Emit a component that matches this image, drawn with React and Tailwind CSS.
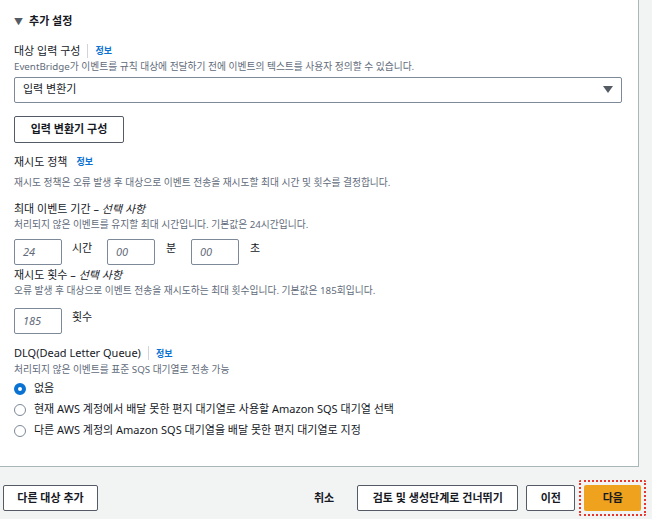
import React from 'react';

const font = { fontFamily: '"Noto Sans", "Noto Sans CJK KR", sans-serif' };

const Info = ({ bar = true }) => (
    <span className="flex items-center">
        {bar && <span className="mx-[7px] h-[14px] w-px bg-[#d1d5db]"></span>}
        <span className="text-[9px] font-bold text-[#0972d3]">정보</span>
    </span>
);

const NumBox = ({ value }) => (
    <div className="flex h-[26px] w-[48px] items-center rounded-[2px] border border-[#7d8998] pl-[8px] text-[11px] italic text-[#5f6b7a]">
        {value}
    </div>
);

const Radio = ({ checked, children }) => (
    <div className="flex h-[21px] items-center gap-[8px]">
        {checked ? (
            <span className="h-[12px] w-[12px] rounded-full border-[4px] border-[#0972d3] bg-white"></span>
        ) : (
            <span className="h-[12px] w-[12px] rounded-full border border-[#7d8998] bg-white"></span>
        )}
        <span className="text-[11px] text-[#16191f]">{children}</span>
    </div>
);

export default function App() {
    return (
        <div className="flex h-[519px] w-[652px] flex-col overflow-hidden bg-[#f2f3f3]" style={font}>
            {/* Panel */}
            <div className="h-[467px] w-[639px] border-b border-r border-[#aab7b8] bg-white pl-[14px] pr-[16px] text-[#16191f]">
                <div className="mt-[13px] flex items-center gap-[6px] text-[11px] font-bold">
                    <span className="text-[9px] text-[#545b64]">▼</span>
                    <span>추가 설정</span>
                </div>

                <div className="mt-[13px] flex items-center text-[11px]">
                    <span>대상 입력 구성</span>
                    <Info />
                </div>
                <p className="mt-[1px] text-[9.75px] text-[#5f6b7a]">EventBridge가 이벤트를 규칙 대상에 전달하기 전에 이벤트의 텍스트를 사용자 정의할 수 있습니다.</p>

                <div className="mt-[2px] flex h-[26px] w-[608px] items-center justify-between rounded-[2px] border border-[#7d8998] pl-[8px] pr-[8px] text-[11px]">
                    <span>입력 변환기</span>
                    <svg width="10" height="7" viewBox="0 0 10 7">
                        <path d="M0 0 H10 L5 7 Z" fill="#545b64" />
                    </svg>
                </div>

                <button className="mt-[13px] flex h-[27px] w-[110px] items-center justify-center rounded-[2px] border border-[#545b64] text-[11px] font-bold text-[#16191f]">
                    입력 변환기 구성
                </button>

                <div className="mt-[11px] flex items-center gap-[9px] text-[11px]">
                    <span>재시도 정책</span>
                    <Info bar={false} />
                </div>
                <p className="mt-[6px] text-[9.75px] text-[#5f6b7a]">재시도 정책은 오류 발생 후 대상으로 이벤트 전송을 재시도할 최대 시간 및 횟수를 결정합니다.</p>

                <div className="mt-[10px] text-[11px]">
                    최대 이벤트 기간 – <span className="italic">선택 사항</span>
                </div>
                <p className="mt-[1px] text-[9.75px] text-[#5f6b7a]">처리되지 않은 이벤트를 유지할 최대 시간입니다. 기본값은 24시간입니다.</p>

                <div className="mt-[6px] flex items-start">
                    <NumBox value="24" />
                    <span className="ml-[10px] w-[35px] text-[11px] leading-[18px]">시간</span>
                    <NumBox value="00" />
                    <span className="ml-[11px] w-[25px] text-[11px] leading-[18px]">분</span>
                    <NumBox value="00" />
                    <span className="ml-[11px] text-[11px] leading-[18px]">초</span>
                </div>

                <div className="mt-[2px] text-[11px]">
                    재시도 횟수 – <span className="italic">선택 사항</span>
                </div>
                <p className="mt-[1px] text-[9.75px] text-[#5f6b7a]">오류 발생 후 대상으로 이벤트 전송을 재시도하는 최대 횟수입니다. 기본값은 185회입니다.</p>

                <div className="mt-[9px] flex items-start">
                    <NumBox value="185" />
                    <span className="ml-[10px] text-[11px] leading-[18px]">횟수</span>
                </div>

                <div className="mt-[11px] flex items-center text-[11px]">
                    <span>DLQ(Dead Letter Queue)</span>
                    <Info />
                </div>
                <p className="mt-[1px] text-[9.75px] text-[#5f6b7a]">처리되지 않은 이벤트를 표준 SQS 대기열로 전송 가능</p>

                <div className="mt-[1px] flex flex-col">
                    <Radio checked>없음</Radio>
                    <Radio>현재 AWS 계정에서 배달 못한 편지 대기열로 사용할 Amazon SQS 대기열 선택</Radio>
                    <Radio>다른 AWS 계정의 Amazon SQS 대기열을 배달 못한 편지 대기열로 지정</Radio>
                </div>
            </div>

            {/* Footer */}
            <div className="mt-[13px] flex items-center pl-[3px] text-[11px] font-bold text-[#16191f]">
                <button className="flex h-[26px] w-[95px] items-center justify-center rounded-[2px] border border-[#545b64] bg-white">
                    다른 대상 추가
                </button>
                <span className="ml-[216px] text-[#16191f]">취소</span>
                <button className="ml-[23px] flex h-[26px] w-[161px] items-center justify-center rounded-[2px] border border-[#545b64] bg-white">
                    검토 및 생성단계로 건너뛰기
                </button>
                <button className="ml-[8px] flex h-[26px] w-[49px] items-center justify-center rounded-[2px] border border-[#545b64] bg-white">
                    이전
                </button>
                <div className="ml-[4px] rounded-[2px] border-2 border-dotted border-[#e8362c] p-[3px]">
                    <button className="flex h-[26px] w-[57px] items-center justify-center rounded-[2px] bg-[#eea21e] text-[#16191f]">
                        다음
                    </button>
                </div>
            </div>
        </div>
    );
}
